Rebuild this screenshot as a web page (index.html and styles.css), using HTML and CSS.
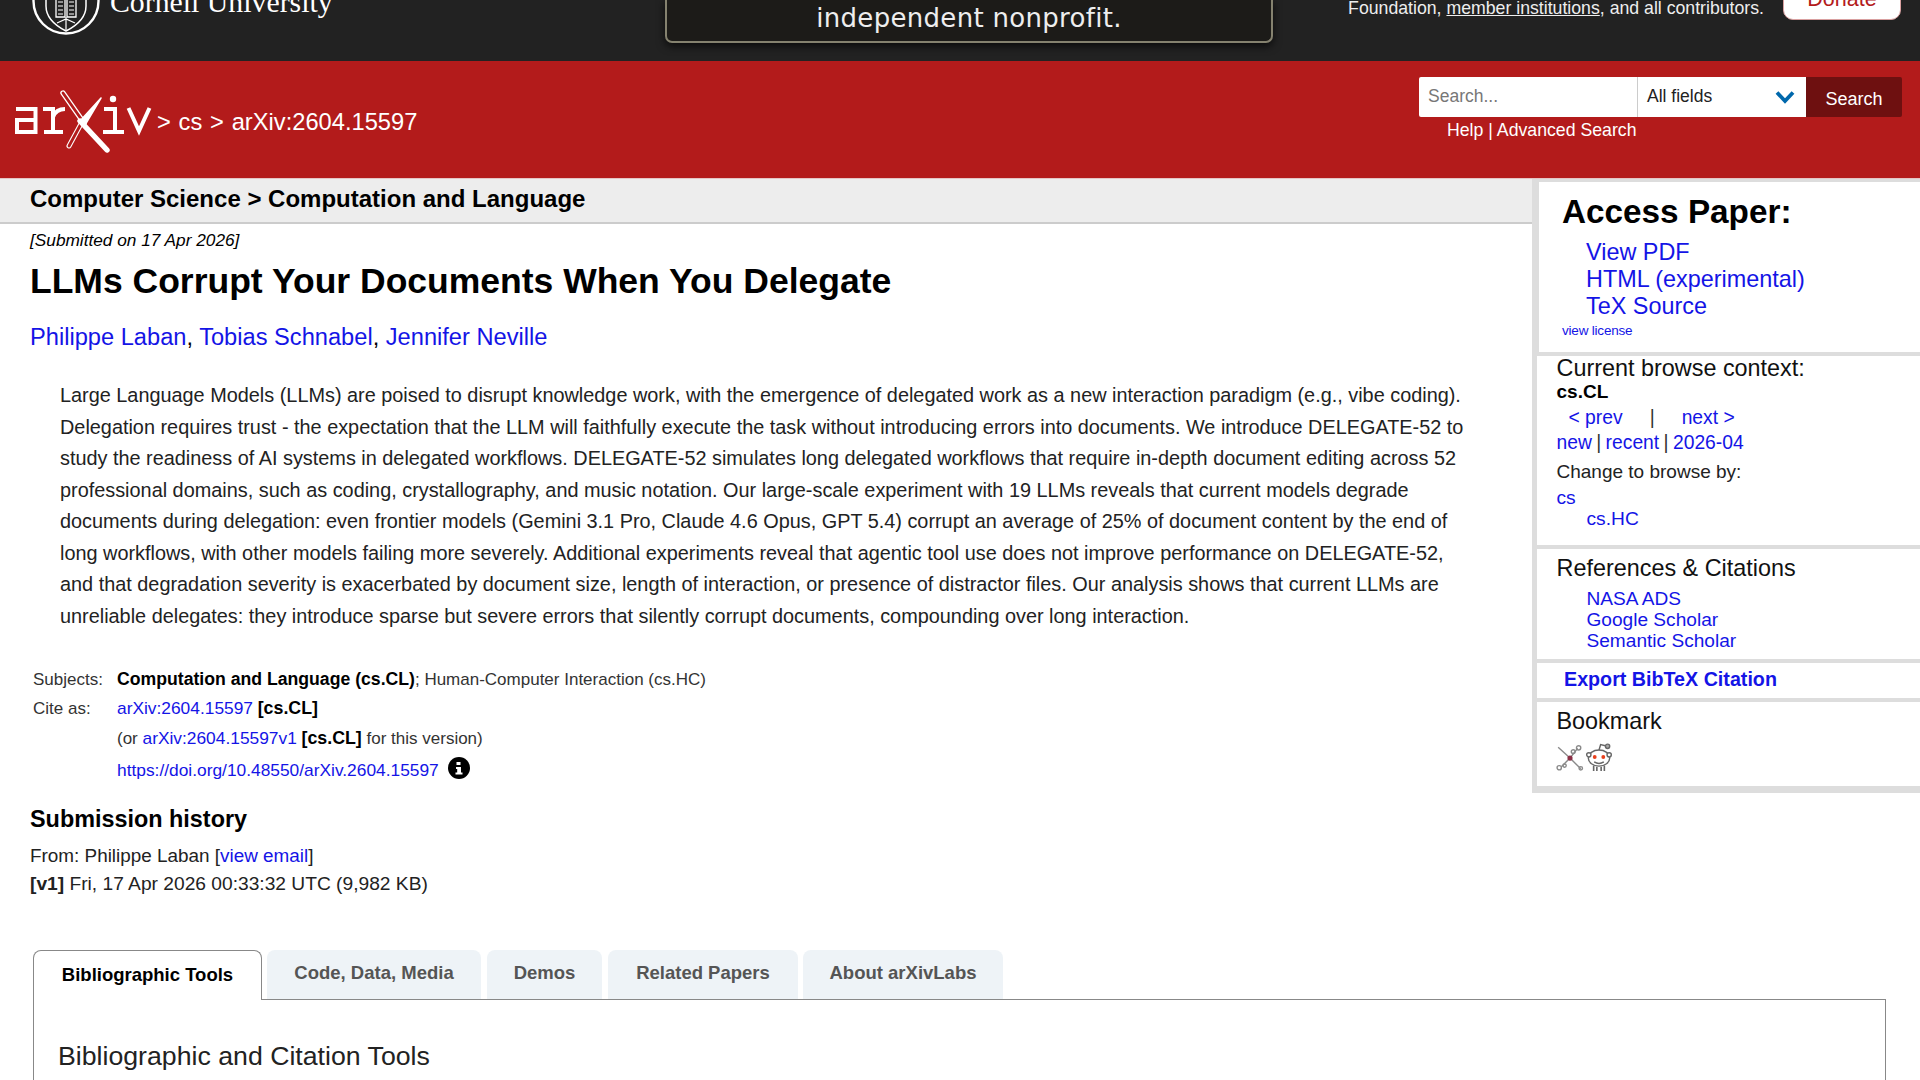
FILE: index.html
```html
<!DOCTYPE html>
<html lang="en">
<head>
<meta charset="utf-8">
<title>LLMs Corrupt Your Documents When You Delegate</title>
<link rel="stylesheet" href="styles.css">
</head>
<body>
<header class="topbar">
  <div class="cornell">
    <svg class="seal" viewBox="0 0 70 36" width="70" height="36" aria-hidden="true">
      <g fill="none" stroke="#fff">
        <circle cx="35" cy="1" r="32.500" stroke-width="2.400"/>
        <path d="M15 -12 H55 V6 Q55 21 35 31 Q15 21 15 6 Z" stroke-width="1.500"/>
        <path d="M25 -2 H34 V17 H25 Z M36 -2 H45 V17 H36 Z" stroke-width="1.300"/>
        <path d="M27 2 H32 M27 6 H32 M27 10 H32 M27 14 H32 M38 2 H43 M38 6 H43 M38 10 H43 M38 14 H43" stroke-width="1.100"/>
        <path d="M35 17 V30 M26 23 L35 19 L44 23" stroke-width="1.200"/>
      </g>
    </svg>
    <span class="cornell-name">Cornell University</span>
  </div>
  <div class="banner">independent nonprofit.</div>
  <div class="support">
    <span class="support-text">Foundation, <a href="#">member institutions</a>, and all contributors.</span>
    <a class="donate" href="#">Donate</a>
  </div>
</header>

<div class="redbar">
  <div class="crumbs">
    <svg class="logo" viewBox="0 0 170 100" width="170" height="100" role="img" aria-label="arXiv logo">
      <g fill="none" stroke="#fff" stroke-width="4" stroke-linejoin="miter">
        <path d="M16 39 H35.500 V62 H17 V50 H35"/>
        <path d="M43 39 H53 V62 M44 62 H63 M53 47 Q56 39 65 39"/>
        <path d="M104 39 H115 V62 M103 62 H124"/>
        <path d="M128.500 38 L139 61 L149.500 38"/>
      </g>
      <circle cx="113" cy="29" r="3.200" fill="#fff"/>
      <path d="M63 23 L84 53" stroke="#fff" stroke-width="5.400" stroke-linecap="round"/>
      <path d="M63 23 L84 53" stroke="#b31b1b" stroke-width="2.800" stroke-linecap="round"/>
      <path d="M82 52 L69 76" stroke="#fff" stroke-width="5" stroke-linecap="round"/>
      <path d="M82 52 L69 76" stroke="#b31b1b" stroke-width="2.800" stroke-linecap="round"/>
      <path d="M80 51 L107 80" stroke="#fff" stroke-width="5.400" stroke-linecap="round"/>
      <path d="M101 28 L80 51 L85 55 Z" fill="#fff" stroke="#fff" stroke-width="1.500" stroke-linejoin="round"/>
    </svg>
    <span class="crumb-text">&gt; cs &gt; arXiv:2604.15597</span>
  </div>
  <form class="search">
    <div class="search-row">
      <div class="search-input">Search...</div>
      <div class="search-select">
        <span>All fields</span>
        <svg viewBox="0 0 20 14" width="20" height="14" aria-hidden="true"><path d="M2 2.500 L10 11 L18 2.500" fill="none" stroke="#0068ac" stroke-width="3.800"/></svg>
      </div>
      <div class="search-btn">Search</div>
    </div>
    <div class="search-links"><a href="#">Help</a> | <a href="#">Advanced Search</a></div>
  </form>
</div>

<div class="page">
  <aside class="sidebar">
    <section class="panel access">
      <h2>Access Paper:</h2>
      <ul class="links big">
        <li><a href="#">View PDF</a></li>
        <li><a href="#">HTML (experimental)</a></li>
        <li><a href="#">TeX Source</a></li>
      </ul>
      <div class="license"><a href="#">view license</a></div>
    </section>
    <section class="panel browse">
      <div class="ctx">Current browse context:</div>
      <div class="ctx-cat">cs.CL</div>
      <div class="prevnext"><a href="#">&lt;&nbsp;prev</a><span class="sep">|</span><a href="#">next&nbsp;&gt;</a></div>
      <div class="newrow"><a href="#">new</a> | <a href="#">recent</a> | <a href="#">2026-04</a></div>
      <div class="change">Change to browse by:</div>
      <div class="cross"><a href="#">cs</a></div>
      <div class="cross sub"><a href="#">cs.HC</a></div>
    </section>
    <section class="panel refs">
      <div class="ctx">References &amp; Citations</div>
      <ul class="links small">
        <li><a href="#">NASA ADS</a></li>
        <li><a href="#">Google Scholar</a></li>
        <li><a href="#">Semantic Scholar</a></li>
      </ul>
    </section>
    <section class="panel export"><a href="#">Export BibTeX Citation</a></section>
    <section class="panel bookmark">
      <div class="ctx">Bookmark</div>
      <div class="icons">
        <svg viewBox="0 0 26 26" width="28" height="28" aria-hidden="true">
          <g fill="none" stroke="#8a8a8a" stroke-width="1.300">
            <path d="M13 14 L2 4 M13 14 L20 5 M13 14 L23 24 M13 14 L5 22"/>
            <circle cx="21" cy="4.500" r="2"/><circle cx="23" cy="23.500" r="1.600"/><circle cx="3" cy="23" r="2"/><circle cx="8" cy="21" r="1.500"/><circle cx="16" cy="8" r="1.800"/>
          </g>
          <circle cx="13" cy="14" r="2.400" fill="#8b2f45"/>
        </svg>
        <svg viewBox="0 0 28 28" width="30" height="30" aria-hidden="true">
          <g fill="none" stroke="#666" stroke-width="1.300">
            <ellipse cx="14" cy="15" rx="10" ry="7.500" fill="#fff"/>
            <path d="M14 7.500 L15.500 2.500 L20 3.500"/>
            <circle cx="22" cy="4" r="2" fill="#aaa"/>
            <circle cx="4.500" cy="12" r="2" fill="#fff"/>
            <circle cx="23.500" cy="12" r="2" fill="#fff"/>
            <path d="M9.500 18.500 Q14 21.500 18.500 18.500"/>
            <path d="M9 22 V27 M12 23 V27 M16 23 V27 M19 22 V27" stroke-width="1.500"/>
          </g>
          <circle cx="10" cy="14" r="1.800" fill="#e8401c"/>
          <circle cx="18" cy="14" r="1.800" fill="#e8401c"/>
        </svg>
      </div>
    </section>
  </aside>

  <main class="main">
    <div class="subhead">Computer Science <span class="gt">&gt;</span> Computation and Language</div>
    <div class="dateline">[Submitted on 17 Apr 2026]</div>
    <h1 class="title">LLMs Corrupt Your Documents When You Delegate</h1>
    <div class="authors"><a href="#">Philippe Laban</a>, <a href="#">Tobias Schnabel</a>, <a href="#">Jennifer Neville</a></div>
    <blockquote class="abstract">Large Language Models (LLMs) are poised to disrupt knowledge work, with the emergence of delegated work as a new interaction paradigm (e.g., vibe coding). Delegation requires trust - the expectation that the LLM will faithfully execute the task without introducing errors into documents. We introduce DELEGATE-52 to study the readiness of AI systems in delegated workflows. DELEGATE-52 simulates long delegated workflows that require in-depth document editing across 52 professional domains, such as coding, crystallography, and music notation. Our large-scale experiment with 19 LLMs reveals that current models degrade documents during delegation: even frontier models (Gemini 3.1 Pro, Claude 4.6 Opus, GPT 5.4) corrupt an average of 25% of document content by the end of long workflows, with other models failing more severely. Additional experiments reveal that agentic tool use does not improve performance on DELEGATE-52, and that degradation severity is exacerbated by document size, length of interaction, or presence of distractor files. Our analysis shows that current LLMs are unreliable delegates: they introduce sparse but severe errors that silently corrupt documents, compounding over long interaction.</blockquote>
    <div class="meta">
      <div class="meta-label">Subjects:</div>
      <div class="meta-value"><span class="primary">Computation and Language (cs.CL)</span>; Human-Computer Interaction (cs.HC)</div>
      <div class="meta-label">Cite as:</div>
      <div class="meta-value"><a href="#">arXiv:2604.15597</a> <b class="cite">[cs.CL]</b></div>
      <div class="meta-label"></div>
      <div class="meta-value">(or <a href="#">arXiv:2604.15597v1</a> <b class="cite">[cs.CL]</b> for this version)</div>
      <div class="meta-label"></div>
      <div class="meta-value doi"><a href="#">https://doi.org/10.48550/arXiv.2604.15597</a>
        <svg class="info" viewBox="0 0 22 22" width="22" height="22" aria-hidden="true"><circle cx="11" cy="11" r="11" fill="#000"/><path d="M8.500 5 H12.500 V8 H8.500 Z M8 10 H13 V15.500 H14.500 V17.500 H7.500 V15.500 H9.200 V12 H8 Z" fill="#fff"/></svg>
      </div>
    </div>
    <h2 class="history-title">Submission history</h2>
    <div class="history from">From: Philippe Laban [<a href="#">view email</a>]</div>
    <div class="history"><b>[v1]</b> Fri, 17 Apr 2026 00:33:32 UTC (9,982 KB)</div>
    <div class="tabs">
      <div class="tab active">Bibliographic Tools</div>
      <div class="tab t2">Code, Data, Media</div>
      <div class="tab t3">Demos</div>
      <div class="tab t4">Related Papers</div>
      <div class="tab t5">About arXivLabs</div>
    </div>
    <div class="tab-panel">
      <h2 class="tab-heading">Bibliographic and Citation Tools</h2>
    </div>
  </main>
</div>
</body>
</html>
```
FILE: styles.css
```css
* { box-sizing: border-box; }
html, body { margin: 0; padding: 0; height: 100%; overflow: hidden; }
body { font-family: "Liberation Sans", Arial, sans-serif; color: #000; background: #fff; }
a { color: #1414e6; text-decoration: none; }
ul { list-style: none; margin: 0; padding: 0; }
h1, h2 { margin: 0; }

/* top bar */
.topbar { height: 61px; background: #222; color: #fff; overflow: hidden; display: grid; grid-template-columns: 665px 608px 1fr; }
.cornell { display: flex; align-items: flex-start; padding-left: 31px; }
.seal { display: block; flex: none; }
.cornell-name { font-family: "Liberation Serif", serif; font-size: 29.800px; line-height: 30px; margin: -13px 0 0 9px; white-space: nowrap; }
.banner { height: 44px; margin-top: -1px; background: #1c1b18; border: 2px solid #85826f; border-top: 0; border-radius: 0 0 7px 7px; box-shadow: 0 3px 9px rgba(0,0,0,.7); font-family: "DejaVu Sans", sans-serif; font-size: 26px; line-height: 38px; color: #eee; display: flex; justify-content: center; align-items: flex-start; letter-spacing: 0.3px; }
.support { display: flex; justify-content: flex-end; align-items: flex-start; padding-right: 19px; }
.support-text { font-size: 17.700px; line-height: 16px; color: #eee; }
.support-text a { color: #eee; text-decoration: underline; }
.donate { display: block; flex: none; width: 118px; height: 40px; margin: -20px 0 0 19px; background: #fff; border: 1px solid #d9a0a0; border-radius: 10px; color: #b31b1b; font-size: 21.500px; line-height: 36px; text-align: center; }

/* red bar */
.redbar { height: 118px; background: #b31b1b; border-bottom: 1px solid #e5c5c5; display: flex; justify-content: space-between; color: #fff; }
.crumbs { display: flex; align-items: flex-start; padding-top: 9px; }
.logo { display: block; flex: none; margin-right: -13px; }
.crumb-text { font-size: 23.700px; line-height: 30px; margin-top: 37px; white-space: nowrap; word-spacing: 1.200px; }
.search { width: 501px; padding: 16px 18px 0 0; }
.search-row { display: flex; height: 40px; }
.search-input { width: 218px; background: #fff; color: #777; font-size: 17.500px; line-height: 38px; padding-left: 9px; border-radius: 2px 0 0 2px; }
.search-select { width: 169px; background: #fff; border-left: 1px solid #ccc; color: #222; font-size: 17.500px; line-height: 36px; padding: 0 11px 2px 9px; display: flex; justify-content: space-between; align-items: center; }
.search-select svg { margin-top: 2px; }
.search-btn { width: 96px; background: #6e1010; color: #fff; font-size: 18px; line-height: 44px; text-align: center; border-radius: 0 2px 2px 0; }
.search-links { font-size: 17.700px; line-height: 26px; margin: 0 0 0 28px; color: #fff; }
.search-links a { color: #fff; }

/* sidebar */
.page { position: relative; }
.sidebar { float: right; width: 388px; height: 614px; background: #ddd; padding: 3px 0 0 5px; }
.panel { background: #fff; margin-bottom: 4px; }
.access { height: 170px; margin-left: 2px; padding: 15px 0 0 23px; }
.access h2 { font-size: 33.300px; line-height: 30px; }
.links { padding-left: 30px; }
.links.big { font-size: 23.400px; line-height: 27px; margin: 12px 0 0 0; padding-left: 24px; }
.license { font-size: 13.500px; line-height: 20px; margin-top: 1px; letter-spacing: -0.2px; }
.browse { height: 189px; padding-left: 19.500px; }
.ctx { font-size: 23.400px; line-height: 24px; color: #111; }
.ctx-cat { font-size: 19px; font-weight: bold; line-height: 24px; }
.prevnext { font-size: 19.300px; line-height: 25px; margin-top: 1px; padding-left: 12px; color: #333; }
.sep { margin: 0 27px; }
.newrow { font-size: 19.300px; line-height: 25px; color: #333; word-spacing: -1px; }
.change { font-size: 19px; line-height: 24px; margin-top: 5px; color: #222; }
.cross { font-size: 19.200px; line-height: 21px; }
.change + .cross { margin-top: 3px; }
.cross.sub { padding-left: 30px; }
.refs { height: 110px; padding: 6px 0 0 19.500px; }
.refs .ctx { line-height: 26px; }
.links.small { font-size: 19.100px; line-height: 21px; margin-top: 6.500px; }
.export { height: 35px; padding-left: 27px; font-size: 19.700px; font-weight: bold; line-height: 33px; }
.bookmark { height: 84px; padding: 6px 0 0 19.500px; }
.bookmark .ctx { line-height: 26px; }
.icons { display: flex; align-items: center; gap: 0; margin: 8px 0 0 -1px; }
.icons svg { display: block; }

/* main */
.subhead { width: 1532px; height: 45px; background: #ededed; border-bottom: 2px solid #ccc; font-size: 24px; font-weight: bold; line-height: 40px; padding-left: 30px; }
.gt { font-weight: bold; }
.dateline { font-size: 17.250px; font-style: italic; line-height: 20px; margin: 6px 0 0 30px; }
.title { font-size: 35.500px; line-height: 40px; margin: 11px 0 0 30px; }
.authors { font-size: 23.650px; line-height: 30px; margin: 21px 0 0 30px; }
.abstract { width: 1415px; margin: 28px 0 0 60px; font-size: 19.870px; line-height: 31.500px; color: #222; }
.meta { margin: 33px 0 0 33px; display: grid; grid-template-columns: 84px 1fr; grid-template-rows: 29px 30px 31px 30px; line-height: 29px; font-size: 17px; color: #333; }
.meta a { font-size: 17.350px; }
.primary { font-size: 17.650px; font-weight: bold; color: #000; }
.cite { font-size: 17.800px; color: #000; }
.doi { display: flex; align-items: center; gap: 9px; }
.info { margin-bottom: 4px; }
.history-title { font-size: 23.400px; line-height: 30px; margin: 19px 0 0 30px; }
.history { font-size: 19.200px; line-height: 28px; margin-left: 30px; color: #222; }
.history.from { font-size: 18.900px; margin-top: 8px; }
.tabs { clear: both; display: flex; height: 49px; margin: 52px 0 0 33px; position: relative; z-index: 1; }
.tab { height: 49px; background: #eef3f7; border-radius: 8px 8px 0 0; color: #555; font-size: 18.500px; font-weight: bold; line-height: 45px; text-align: center; }
.tab.active { width: 229px; background: #fff; border: 1px solid #888; border-bottom: 0; height: 50px; color: #000; line-height: 47px; margin-right: 5px; }
.t2 { width: 214px; margin-right: 6px; }
.t3 { width: 115px; margin-right: 6px; }
.t4 { width: 190px; margin-right: 5px; }
.t5 { width: 200px; }
.tab-panel { width: 1853px; height: 200px; margin-left: 33px; border: 1px solid #888; padding: 39px 0 0 24px; }
.tab-heading { font-size: 26.700px; font-weight: normal; line-height: 34px; color: #222; }
```
